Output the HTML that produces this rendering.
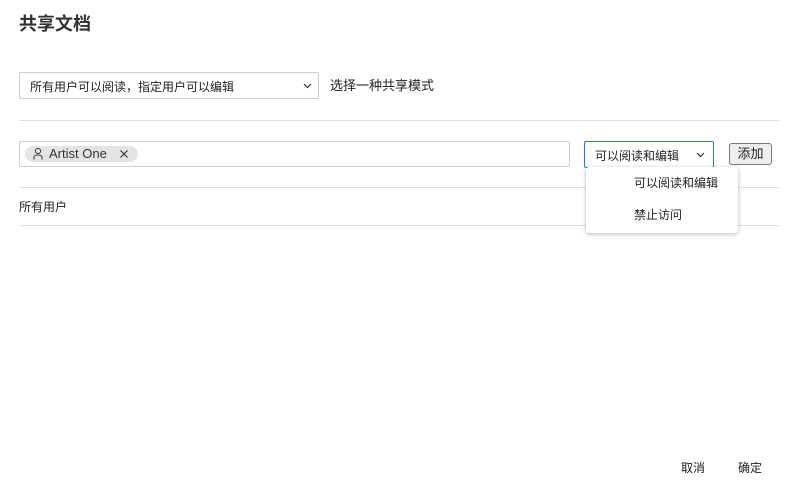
<!DOCTYPE html>
<html><head><meta charset="utf-8"><style>
*{box-sizing:border-box;margin:0;padding:0}
body{width:798px;height:498px;background:#fff;font-family:"Liberation Sans","Noto Sans CJK SC",sans-serif;color:#222;position:relative;overflow:hidden;font-size:13px}
.a{position:absolute}
.hr{position:absolute;left:19px;width:760px;height:1px;background:#e0e0e0}
</style></head><body>
<div class="a" style="left:19px;top:10px;font-size:18px;font-weight:bold;color:#333">共享文档</div>
<div class="a" style="left:19px;top:72px;width:300px;height:27px;border:1px solid #ccc;border-radius:2px;padding:5px 0 0 10px;font-size:12px">所有用户可以阅读，指定用户可以编辑
<svg class="a" style="left:283px;top:10px" width="9" height="6"><path d="M1 1L4.5 4.5L8 1" stroke="#333" fill="none" stroke-width="1.2"/></svg></div>
<div class="a" style="left:330px;top:75px;font-size:13px">选择一种共享模式</div>
<div class="hr" style="top:120px"></div>
<div class="a" style="left:19px;top:141px;width:551px;height:26px;border:1px solid #ccc;border-radius:2px"></div>
<div class="a" style="left:25px;top:146px;width:113px;height:16px;background:#e4e4e4;border-radius:8px;font-size:13px;line-height:16px;padding-left:24px;color:#333">Artist One</div>
<svg class="a" style="left:33px;top:147px" width="10" height="13"><circle cx="5" cy="4" r="2.6" stroke="#444" fill="none" stroke-width="1.1"/><path d="M1 12.5V10.5Q1 8 5 8Q9 8 9 10.5V12.5" stroke="#444" fill="none" stroke-width="1.1"/></svg>
<svg class="a" style="left:119px;top:149px" width="10" height="10"><path d="M1.5 1.5L8.5 8.5M8.5 1.5L1.5 8.5" stroke="#333" stroke-width="1.2"/></svg>
<div class="a" style="left:584px;top:141px;width:130px;height:27px;border:1px solid #3b6fd6;border-radius:2px;padding:5px 0 0 10px;font-size:12px">可以阅读和编辑
<svg class="a" style="left:111px;top:10px" width="9" height="6"><path d="M1 1L4.5 4.5L8 1" stroke="#333" fill="none" stroke-width="1.2"/></svg></div>
<div class="a" style="left:729px;top:143px;width:43px;height:22px;border:1px solid #777;border-radius:3px;background:#eee;font-size:13px;text-align:center;line-height:20px">添加</div>
<div class="hr" style="top:187px"></div>
<div class="a" style="left:19px;top:198px;font-size:12px">所有用户</div>
<div class="hr" style="top:225px"></div>
<div class="a" style="left:586px;top:167px;width:152px;height:66px;background:#fff;border-radius:3px;box-shadow:0 1px 4px rgba(0,0,0,.3);font-size:12px">
<div class="a" style="left:48px;top:7px">可以阅读和编辑</div>
<div class="a" style="left:48px;top:39px">禁止访问</div></div>
<div class="a" style="left:681px;top:459px;font-size:12px">取消</div>
<div class="a" style="left:738px;top:459px;font-size:12px">确定</div>
</body></html>
